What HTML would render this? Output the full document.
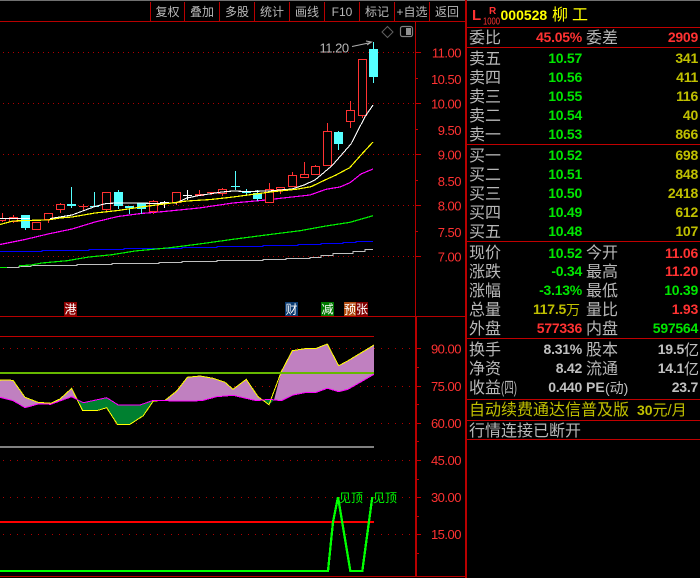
<!DOCTYPE html>
<html><head><meta charset="utf-8">
<style>
html,body{margin:0;padding:0;background:#000;width:700px;height:578px;overflow:hidden}
svg{display:block;position:absolute;left:0;top:0}
text{font-family:"Liberation Sans","WenQuanYi Zen Hei","Noto Sans CJK SC",sans-serif}
.tb{font-size:12px;fill:#b8b8b8;text-anchor:middle}
.ax{font-size:13px;fill:#ff3232;text-anchor:end;letter-spacing:-.5px}
.l{font-size:16px;fill:#b8b8b8}
.n{font-size:14px;font-weight:bold;text-anchor:end;letter-spacing:-.25px}
.g{fill:#00e600}.y{fill:#c0c000}.r{fill:#ff3232}.w{fill:#c0c0c0}
.tag{font-size:12px;fill:#fff;text-anchor:middle}
</style></head><body>
<svg width="700" height="578" viewBox="0 0 700 578" xmlns="http://www.w3.org/2000/svg">
<rect width="700" height="578" fill="#000"/>
<rect width="700" height="1" fill="#707070"/>

<!-- toolbar -->
<g shape-rendering="crispEdges" fill="#b80000">
<rect x="0" y="21" width="466" height="1"/>
<rect x="150" y="2" width="1" height="19"/><rect x="184" y="2" width="1" height="19"/><rect x="219" y="2" width="1" height="19"/><rect x="254" y="2" width="1" height="19"/><rect x="289" y="2" width="1" height="19"/><rect x="324" y="2" width="1" height="19"/><rect x="359" y="2" width="1" height="19"/><rect x="394" y="2" width="1" height="19"/><rect x="429" y="2" width="1" height="19"/>
<rect x="465" y="0" width="2" height="578"/>
<rect x="415" y="22" width="1" height="294"/>
<rect x="0" y="316" width="466" height="1"/>
<rect x="415" y="316" width="2" height="261"/>
<rect x="0" y="576" width="466" height="1"/>
</g>
<text class="tb" x="167.500" y="16">复权</text>
<text class="tb" x="202" y="16">叠加</text>
<text class="tb" x="237" y="16">多股</text>
<text class="tb" x="272" y="16">统计</text>
<text class="tb" x="307" y="16">画线</text>
<text class="tb" x="342" y="16">F10</text>
<text class="tb" x="377" y="16">标记</text>
<text class="tb" x="412" y="16">+自选</text>
<text class="tb" x="447" y="16">返回</text>

<!-- dotted grids -->
<g stroke="#b00000" stroke-width="1" stroke-dasharray="1 4" shape-rendering="crispEdges">
<path d="M3 52.500H416M3 103.500H416M3 154.500H416M3 205.500H416M3 256.500H416"/>
<path d="M3 348.500H416M3 386.500H416M3 423.500H416M3 460.500H416M3 497.500H416M3 534.500H416" stroke-dasharray="1 6"/>
</g>

<!-- axis ticks -->
<g stroke="#c00000" stroke-width="1" shape-rendering="crispEdges">
<path d="M416 52.500H421M416 103.500H421M416 154.500H421M416 205.500H421M416 256.500H421M416 78.500H418M416 129.500H418M416 180.500H418M416 231.500H418"/>
<path d="M417 348.500H421M417 386.500H421M417 423.500H421M417 460.500H421M417 497.500H421M417 534.500H421M417 367.500H419M417 404.500H419M417 441.500H419M417 479.500H419M417 516.500H419M417 553.500H419"/>
</g>
<text class="ax" x="461" y="57.500">11.00</text>
<text class="ax" x="461" y="84">10.50</text>
<text class="ax" x="461" y="108.500">10.00</text>
<text class="ax" x="461" y="135">9.50</text>
<text class="ax" x="461" y="159.500">9.00</text>
<text class="ax" x="461" y="186">8.50</text>
<text class="ax" x="461" y="210.500">8.00</text>
<text class="ax" x="461" y="237">7.50</text>
<text class="ax" x="461" y="261.500">7.00</text>
<text class="ax" x="461" y="353.500">90.00</text>
<text class="ax" x="461" y="391">75.00</text>
<text class="ax" x="461" y="428">60.00</text>
<text class="ax" x="461" y="465">45.00</text>
<text class="ax" x="461" y="502">30.00</text>
<text class="ax" x="461" y="539">15.00</text>

<!-- long MAs -->
<g fill="none" stroke-width="1" shape-rendering="crispEdges">
<path stroke="#c0c0c0" d="M0 267.500H19V266.500H31V265.500H77V264.500H112V263.500H159V262.500H182V261.500H217V260.500H263V259.500H286V258.500H310V257.500H321V255.500H333V253.500H353V251.500H365V249.500H373"/>
<path stroke="#0000ff" d="M0 251.500H42V250.500H89V249.500H124V248.500H182V247.500H217V246.500H263V245.500H298V244.500H321V243.500H343V242.500H356V241.500H373"/>
</g>
<g fill="none" stroke-linejoin="round" shape-rendering="crispEdges">
<path stroke="#00f000" stroke-width="1.200" d="M0 267.500H7M19 265.800L31 265L42 263L67 260.700L89 257L112 254.700L135 251L170 247.700L197 244.300L233 239.300L266 235L300 230.700L326 226L350 222.300L373 215.700"/>
<path stroke="#ff00ff" stroke-width="1.200" d="M0 244.500L25 239.500L48 234L72 229L95 222L118 216.500L141 213.500L164 211.500L199 208L233 203L266 200L283 198L310 195L326 189.300L340 187L350 182.700L361 174L373 169"/>
</g>

<!-- candles -->
<g shape-rendering="crispEdges">
<g stroke="#ff3232" fill="#000">
<path fill="none" d="M2.500 213V222M13.500 215V223M48.500 220V223M60.500 203V213M83.500 204V210M106.500 209V211M153.500 200V214M176.500 203V205M199.500 190V196M211.500 193V195M222.500 188V196M269.500 183V202M280.500 190V194M292.500 172V187M304.500 162V174M315.500 165V175M327.500 123V131M350.500 101V128M362.500 115V118"/>
<rect x="-2.500" y="218.500" width="8" height="2"/>
<rect x="9.500" y="217.500" width="8" height="4"/>
<rect x="32.500" y="222.500" width="8" height="7"/>
<rect x="44.500" y="213.500" width="8" height="6"/>
<rect x="56.500" y="204.500" width="8" height="5"/>
<path d="M79 206.500H88"/>
<rect x="102.500" y="192.500" width="8" height="17"/>
<rect x="149.500" y="201.500" width="8" height="10"/>
<rect x="172.500" y="192.500" width="8" height="10"/>
<rect x="195.500" y="194.500" width="8" height="1" fill="#ff3232"/>
<path d="M207 192.500H216"/>
<rect x="218.500" y="189.500" width="8" height="4"/>
<rect x="265.500" y="189.500" width="8" height="13"/>
<rect x="276.500" y="187.500" width="8" height="2"/>
<rect x="288.500" y="175.500" width="8" height="11"/>
<rect x="300.500" y="174.500" width="8" height="3"/>
<rect x="311.500" y="166.500" width="8" height="8"/>
<rect x="323.500" y="131.500" width="8" height="34"/>
<rect x="346.500" y="110.500" width="8" height="11"/>
<rect x="358.500" y="59.500" width="8" height="56"/>
</g>
<g stroke="#55ffff" fill="#55ffff">
<path fill="none" d="M25.500 228V230M71.500 187V208M94.500 192V207M118.500 190V209M129.500 206V214M141.500 203V214M235.500 171V190M246.500 189V195M257.500 190V201M338.500 131V150M373.500 42V83"/>
<rect x="21.500" y="215.500" width="8" height="12"/>
<rect x="67.500" y="204.500" width="8" height="1"/>
<path d="M90 206.500H99"/>
<rect x="114.500" y="192.500" width="8" height="13"/>
<rect x="125.500" y="206.500" width="8" height="1"/>
<rect x="137.500" y="203.500" width="8" height="5"/>
<path d="M231 186.500H240M242 192.500H251"/>
<rect x="253.500" y="193.500" width="8" height="5"/>
<rect x="334.500" y="132.500" width="8" height="11"/>
<rect x="369.500" y="49.500" width="8" height="27"/>
</g>
<path stroke="#fff" fill="none" d="M164.500 201V208M160 202.500H169M187.500 190V200M183 195.500H192"/>
</g>

<!-- short MAs -->
<g fill="none" stroke-linejoin="round" shape-rendering="crispEdges">
<path stroke="#fff" stroke-width="1.100" d="M0 218.500H30M50 218.500L60 217L72 215L84 210.500L95 206.500L106 203.500L118 203H141L153 203.500L176 203L187 198L199 195.500L222 192L233 191L246 191.500L269 191L292 189L304 185L315 180L332 165.700L351 144L365 116.700L373 105"/>
<path stroke="#ffff00" stroke-width="1.200" d="M0 224.500L13 221L25 220.500L48 220L60 218L72 217L95 213L118 210.500L141 207L164 204L187 201L211 199.500L233 197L273 191.700L296 189.300L311 186.700L325 180L336 175L349.700 167.700L361 155L373 142"/>
</g>

<!-- annotation and icons -->
<text x="319.500" y="52.500" font-size="13" fill="#b8b8b8" letter-spacing="-.5">11.20</text>
<path d="M352 46.500L371 42.500M366 41L371.500 42L367 45" fill="none" stroke="#b0b0b0" stroke-width="1"/>
<path d="M387.500 26.500L393 32L387.500 37.500L382 32Z" fill="none" stroke="#606060"/>
<rect x="400.500" y="26.500" width="12" height="10" rx="2" fill="none" stroke="#808080" stroke-width="1.200"/>
<rect x="406" y="28" width="5" height="7" fill="#909090"/>

<!-- tags -->
<g shape-rendering="crispEdges">
<rect x="64" y="302" width="13" height="14" fill="#8a0000"/>
<rect x="285" y="302" width="13" height="14" fill="#0a3a70"/>
<rect x="321" y="302" width="13" height="14" fill="#007800"/>
<rect x="344" y="302" width="12" height="14" fill="#b04a10"/>
<rect x="356" y="302" width="12" height="14" fill="#800000"/>
</g>
<text class="tag" x="70.500" y="313.500">港</text>
<text class="tag" x="291.500" y="313.500">财</text>
<text class="tag" x="327.500" y="313.500">减</text>
<text class="tag" x="350" y="313.500">预</text>
<text class="tag" x="362" y="313.500">张</text>

<!-- lower panel -->
<path d="M0 336.500H374" stroke="#c00000" shape-rendering="crispEdges"/>
<g fill="#c080c0">
<polygon points="0,380.300 1.700,380 13,380.300 25,397.300 38,402.300 50.700,403.300 60,399 71.700,388.300 77.300,400 71.700,396.700 50.700,404.300 38.300,404 25,407.700 13.300,400.700 0,397.300"/>
<polygon points="153.300,400.700 165,400.300 176.700,391 187.300,377.300 200,376 213.300,378.300 225,382.300 233,389.300 246.300,379.300 258,396.700 262,400 256.300,400.700 233,395.300 216.700,396.700 201.700,400.700 176.700,401"/>
<polygon points="274,400 281.300,371.700 292.300,350.700 304.700,348.700 316.300,348.300 327.300,344 338.700,365.700 348,360.700 361.300,352.700 374,345 374,374.300 361.300,381.700 348,389.300 338.700,391.700 327.300,388.300 316.300,392.300 304.700,392.700 293,395 281.300,400.700"/>
</g>
<g fill="#008030">
<polygon points="77.300,400 82.700,410.700 96.700,410.700 106.700,407.700 117.300,424.300 130,424.300 143.300,415.700 153.300,400.700 140,405 118.300,405 106.700,397.700 83.300,402.700"/>
<polygon points="262,400 269,404.700 274,400 269,399.300"/>
</g>
<g fill="none" stroke-width="1" shape-rendering="crispEdges">
<path stroke="#ffff00" d="M0 380.300L1.700 380L13 380.300L25 397.300L38 402.300L50.700 403.300L60 399L71.700 388.300L77.300 400L82.700 410.700H96.700L106.700 407.700L117.300 424.300H130L143.300 415.700L153.300 401L165 400.300L176.700 391L187.300 377.300L200 376L213.300 378.300L225 382.300L233 389.300L246.300 379.300L258 396.700L269 404.700L281.300 371.700L292.300 350.700L304.700 348.700L316.300 348.300L327.300 344L338.700 365.700L348 360.700L361.300 352.700L374 345"/>
<path stroke="#ff00ff" d="M0 397.300L13.300 400.700L25 407.700L38.300 404L50.700 404.300L71.700 396.700L83.300 402.700L106.700 397.700L118.300 405H140L153.300 400.300L176.700 401L201.700 400.700L216.700 396.700L233 395.300L256.300 400.700L269 399.300L281.300 400.700L293 395L304.700 392.700L316.300 392.300L327.300 388.300L338.700 391.700L348 389.300L361.300 381.700L374 374.300"/>
</g>
<g shape-rendering="crispEdges">
<rect x="0" y="372" width="374" height="2" fill="#66b800"/>
<rect x="0" y="446" width="374" height="2" fill="#808080"/>
<rect x="0" y="521" width="374" height="2" fill="#ff0000"/>
</g>
<path d="M0 571H328L333 522L338 497L350.300 571H362.300L372.300 497" fill="none" stroke="#00ff00" stroke-width="2.300" shape-rendering="crispEdges"/>
<text x="339" y="502" font-size="12" fill="#00ff00">见顶</text>
<text x="373" y="502" font-size="12" fill="#00ff00">见顶</text>

<!-- right panel -->
<g shape-rendering="crispEdges" fill="#c00000">
<rect x="467" y="27" width="233" height="1"/>
<rect x="467" y="47" width="233" height="1"/>
<rect x="467" y="144" width="233" height="1"/>
<rect x="467" y="241" width="233" height="1"/>
<rect x="467" y="338" width="233" height="1"/>
<rect x="467" y="399" width="233" height="1"/>
<rect x="467" y="420" width="233" height="1"/>
<rect x="467" y="439" width="233" height="1"/>
</g>
<text x="472" y="20" font-size="15" font-weight="bold" fill="#ff3232">L</text>
<text x="489" y="14" font-size="10" font-weight="bold" fill="#ff3232">R</text>
<text x="483" y="24.500" font-size="10" fill="#ff3232" textLength="17" lengthAdjust="spacingAndGlyphs">1000</text>
<text x="500.500" y="20" font-size="14" font-weight="bold" fill="#ffff00">000528</text>
<text x="552" y="20" font-size="16" fill="#ffff00" letter-spacing="4">柳工</text>

<text class="l" x="469" y="43">委比</text>
<text class="n r" x="582" y="42">45.05%</text>
<text class="l" x="586" y="43">委差</text>
<text class="n r" x="698" y="42">2909</text>

<text class="l" x="469" y="64">卖五</text><text class="n g" x="582" y="63">10.57</text><text class="n y" x="698" y="63">341</text>
<text class="l" x="469" y="83">卖四</text><text class="n g" x="582" y="82">10.56</text><text class="n y" x="698" y="82">411</text>
<text class="l" x="469" y="102">卖三</text><text class="n g" x="582" y="101">10.55</text><text class="n y" x="698" y="101">116</text>
<text class="l" x="469" y="121">卖二</text><text class="n g" x="582" y="120">10.54</text><text class="n y" x="698" y="120">40</text>
<text class="l" x="469" y="140">卖一</text><text class="n g" x="582" y="139">10.53</text><text class="n y" x="698" y="139">866</text>

<text class="l" x="469" y="161">买一</text><text class="n g" x="582" y="160">10.52</text><text class="n y" x="698" y="160">698</text>
<text class="l" x="469" y="180">买二</text><text class="n g" x="582" y="179">10.51</text><text class="n y" x="698" y="179">848</text>
<text class="l" x="469" y="199">买三</text><text class="n g" x="582" y="198">10.50</text><text class="n y" x="698" y="198">2418</text>
<text class="l" x="469" y="218">买四</text><text class="n g" x="582" y="217">10.49</text><text class="n y" x="698" y="217">612</text>
<text class="l" x="469" y="237">买五</text><text class="n g" x="582" y="236">10.48</text><text class="n y" x="698" y="236">107</text>

<text class="l" x="469" y="258">现价</text><text class="n g" x="582" y="258">10.52</text><text class="l" x="586" y="258">今开</text><text class="n r" x="698" y="258">11.06</text>
<text class="l" x="469" y="277">涨跌</text><text class="n g" x="582" y="276">-0.34</text><text class="l" x="586" y="277">最高</text><text class="n r" x="698" y="276">11.20</text>
<text class="l" x="469" y="296">涨幅</text><text class="n g" x="582" y="295">-3.13%</text><text class="l" x="586" y="296">最低</text><text class="n g" x="698" y="295">10.39</text>
<text class="l" x="469" y="315">总量</text><text class="n y" x="566" y="314">117.5</text><text x="566" y="315" font-size="14" class="y">万</text><text class="l" x="586" y="315">量比</text><text class="n r" x="698" y="314">1.93</text>
<text class="l" x="469" y="334">外盘</text><text class="n r" x="582" y="333">577336</text><text class="l" x="586" y="334">内盘</text><text class="n g" x="698" y="333">597564</text>

<text class="l" x="469" y="355">换手</text><text class="n w" x="582" y="354">8.31%</text><text class="l" x="586" y="355">股本</text><text class="n w" x="684" y="354">19.5</text><text x="684" y="355" font-size="15" class="w">亿</text>
<text class="l" x="469" y="374">净资</text><text class="n w" x="582" y="373">8.42</text><text class="l" x="586" y="374">流通</text><text class="n w" x="684" y="373">14.1</text><text x="684" y="374" font-size="15" class="w">亿</text>
<text class="l" x="469" y="393">收益</text><text class="l" x="501" y="393" textLength="16" lengthAdjust="spacingAndGlyphs">(四)</text><text class="n w" x="582" y="392">0.440</text><text x="586" y="392" font-size="14" font-weight="bold" class="w">PE</text><text x="605" y="393" font-size="14" class="w">(动)</text><text class="n w" x="698" y="392">23.7</text>

<text x="469" y="415" font-size="16" class="y">自动续费通达信普及版</text>
<text x="637" y="415" font-size="14" font-weight="bold" class="y">30</text>
<text x="652.500" y="415" font-size="15" class="y">元/月</text>
<text class="l" x="469" y="436">行情连接已断开</text>
</svg>
</body></html>
